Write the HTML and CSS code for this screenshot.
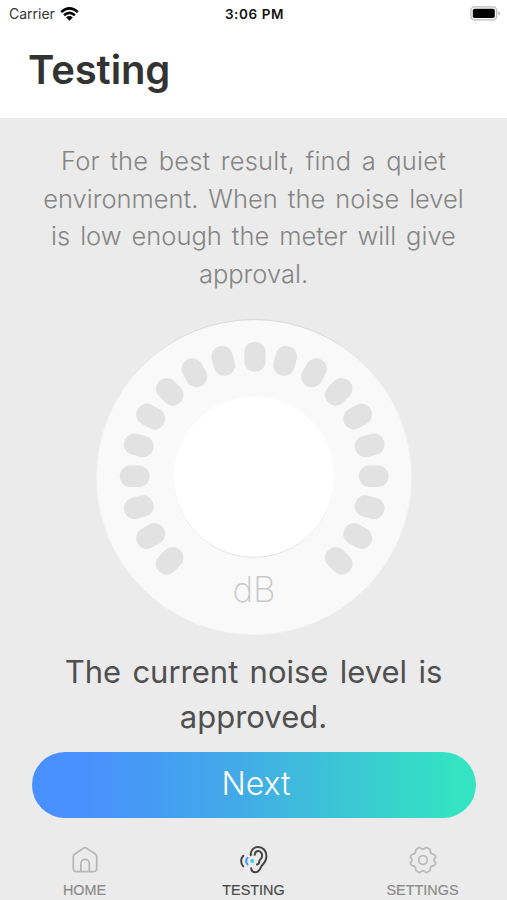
FILE: index.html
```
<!DOCTYPE html>
<html lang="en">
  <head>
    <meta charset="utf-8">
    <title>Testing</title>
    <link rel="stylesheet" href="styles.css">
  </head>
  <body>
    <header class="header">
      <div class="status-bar">
        <div class="carrier">Carrier
          <svg class="wifi" width="19" height="14" viewBox="0 0 19 14">
            <path d="M1.2 5.2Q9.5 -2.4 17.8 5.2M4.1 8.3Q9.5 3.4 14.9 8.3" fill="none" stroke="#000" stroke-width="2.5"/>
            <path d="M6.1 10.4Q9.5 7.6 12.9 10.4L9.5 13.8Z"/>
          </svg>
        </div>
        <div class="time">3:06 PM</div>
        <svg class="battery" width="31" height="15" viewBox="0 0 31 15">
          <rect x=".9" y=".9" width="25.7" height="13" rx="3.6" fill="#fff" stroke="#bbb" stroke-width="1.3"/>
          <rect x="2.8" y="2.8" width="22" height="9.2" rx="1.8"/>
          <path d="M28.3 5.2Q30.2 6 30.2 7.4T28.3 9.6Z" fill="#bbb"/>
        </svg>
      </div>
      <h1>Testing</h1>
    </header>

    <main>
      <p class="hint">
        <span class="wide">For the best result, find a quiet</span>
        <span>environment. When the noise level</span>
        <span>is low enough the meter will give</span>
        <span>approval.</span>
      </p>

      <svg class="meter" width="320" height="320" viewBox="-160 -160 320 320">
        <defs>
          <rect id="tick" x="-10.7" y="-134.5" width="21.4" height="30" rx="10.4"/>
          <linearGradient id="rim" x1="0" y1="0" x2="0" y2="1">
            <stop offset="0" stop-color="#d6d6d6"/>
            <stop offset=".2" stop-color="#f0f0f0"/>
            <stop offset="1" stop-color="#f5f5f5"/>
          </linearGradient>
          <linearGradient id="hub" x1="0" y1="0" x2="0" y2="1">
            <stop offset=".5" stop-color="#fcfcfc"/>
            <stop offset="1" stop-color="#e4e4e4"/>
          </linearGradient>
        </defs>
        <circle r="157.5" fill="#f9f9f9" stroke="url(#rim)"/>
        <circle r="80.3" fill="#fff" stroke="url(#hub)"/>
        <g fill="#e2e2e2" transform="translate(.2 -.7)">
          <use href="#tick" transform="rotate(-135)"/>
          <use href="#tick" transform="rotate(-120)"/>
          <use href="#tick" transform="rotate(-105)"/>
          <use href="#tick" transform="rotate(-90)"/>
          <use href="#tick" transform="rotate(-75)"/>
          <use href="#tick" transform="rotate(-60)"/>
          <use href="#tick" transform="rotate(-45)"/>
          <use href="#tick" transform="rotate(-30)"/>
          <use href="#tick" transform="rotate(-15)"/>
          <use href="#tick" transform="translate(.8 0)"/>
          <use href="#tick" transform="rotate(15)"/>
          <use href="#tick" transform="rotate(30)"/>
          <use href="#tick" transform="rotate(45)"/>
          <use href="#tick" transform="rotate(60)"/>
          <use href="#tick" transform="rotate(75)"/>
          <use href="#tick" transform="rotate(90)"/>
          <use href="#tick" transform="rotate(105)"/>
          <use href="#tick" transform="rotate(120)"/>
          <use href="#tick" transform="rotate(135)"/>
        </g>
        <text class="unit" x="0" y="124.5">dB</text>
      </svg>

      <p class="result">
        <span>The current noise level is</span>
        <span>approved.</span>
      </p>
      <button class="next">Next</button>
    </main>

    <nav class="tabs">
      <a class="tab">
        <svg width="30" height="30" viewBox="0 0 30 30" fill="none" stroke="#b5b5b5" stroke-width="1.7" stroke-linejoin="round">
          <path d="M3.3 11.6Q3.3 10.2 4.5 9.3L13.6 3.1Q15 2.2 16.4 3.1L25.5 9.3Q26.7 10.2 26.7 11.6V23.2Q26.7 26.7 23.2 26.7H6.8Q3.3 26.7 3.3 23.2Z"/>
          <path d="M10.9 26.5V18.6A4.2 4.2 0 0 1 19.3 18.6V26.5"/>
        </svg>
        <span>HOME</span>
      </a>
      <a class="tab active">
        <svg width="30" height="30" viewBox="0 0 30 30" fill="none" stroke="#444" stroke-width="2" stroke-linecap="round">
          <path d="M11.8 10.2C11.4 5.5 14.6 2 19 2C24 2 27.4 5.8 27.4 11C27.4 16.3 24.9 18.4 22.8 20.7C21.2 22.5 21 27.2 16.4 27.2C13.7 27.2 12.4 25.6 12.2 23.3"/>
          <path d="M15.6 9.8C16 7.3 17.3 6 19.3 6.1C22.3 6.2 23.6 9.2 22.8 12.2C22.2 14.4 20.2 14.6 20.2 16.6C20.2 18.5 19.4 19.4 18 19.6"/>
          <path d="M4.3 10.7C1.4 13.7 1.4 18.4 4.3 21.4"/>
          <path d="M8.5 12.8C6.9 14.7 6.9 17.5 8.5 19.4" stroke="#4795fb"/>
          <circle cx="13.2" cy="16" r="2" fill="#35d3e5" stroke="none"/>
        </svg>
        <span>TESTING</span>
      </a>
      <a class="tab">
        <svg width="30" height="30" viewBox="0 0 30 30" fill="none" stroke="#b9b9b9" stroke-width="1.7" stroke-linejoin="round">
          <path d="M11.2 2.6Q12.3 2.1 12.8 3.1Q15 5 17.2 3.1Q17.7 2.1 18.8 2.6L21.5 4.1Q22.6 4.7 22.2 5.8Q22.1 8.8 25.2 9.3Q26.7 9.3 27 10.5Q28.2 12.2 27 13.1Q24.8 15 27 16.9Q28.2 17.9 27 19.5Q26.7 20.7 25.2 20.7Q22.1 21.2 22.2 24.2Q22.6 25.3 21.5 25.9L18.8 27.4Q17.7 27.9 17.2 26.9Q15 25 12.8 26.9Q12.3 27.9 11.2 27.4L8.5 25.9Q7.4 25.3 7.8 24.2Q7.9 21.2 4.8 20.7Q3.3 20.7 3 19.5Q1.8 17.9 3 16.9Q5.2 15 3 13.1Q1.8 12.2 3 10.5Q3.3 9.3 4.8 9.3Q7.9 8.8 7.8 5.8Q7.4 4.7 8.5 4.1Z"/>
          <circle cx="15" cy="15" r="4.3"/>
        </svg>
        <span>SETTINGS</span>
      </a>
    </nav>
  </body>
</html>
```
FILE: styles.css
```
* { box-sizing: border-box; }

body {
	margin: 0;
	height: 900px;
	overflow: hidden;
	display: flex;
	flex-direction: column;
	font-family: Inter, "Liberation Sans", Arial, sans-serif;
	background: #ebebeb;
	color: #4a4a4a;
}

.header { height: 118px; background: #fff; }

.status-bar {
	display: grid;
	grid-template-columns: 1fr auto 1fr;
	align-items: center;
	height: 27px;
	padding: 0 6px 0 8px;
	color: #111;
}

.carrier {
	display: flex;
	align-items: center;
	gap: 5px;
	padding-left: 1px;
	font-size: 14px;
	color: #333;
}

.time { font-size: 13.5px; font-weight: 600; letter-spacing: 0.6px; }
.battery { justify-self: end; }

h1 {
	margin: 17px 0 0 28px;
	font-size: 40px;
	line-height: 52px;
	font-weight: 600;
	letter-spacing: -0.1px;
	color: #333;
}

main { display: flex; flex-direction: column; align-items: center; }

.hint, .result { margin: 0; text-align: center; white-space: nowrap; }
.hint span, .result span { display: block; }

.hint {
	margin-top: 24px;
	font-size: 25.5px;
	line-height: 37.7px;
	font-weight: 300;
	word-spacing: 2.8px;
	color: #858585;
}

.hint .wide { word-spacing: 3px; letter-spacing: 0.2px; }

.meter { margin-top: 24px; }
.unit { font-size: 35px; font-weight: 250; fill: #c9c9c9; text-anchor: middle; }

.result {
	margin-top: 12px;
	font-size: 31px;
	line-height: 45px;
	font-weight: 400;
	word-spacing: 2.6px;
	color: #505050;
}

.next {
	width: 444px;
	height: 66px;
	margin-top: 13px;
	padding: 0 0 3px 5px;
	border: none;
	border-radius: 33px;
	background: linear-gradient(90deg, #488fff 10%, #42ace6 48%, #33e3c2 95%);
	color: #fff;
	font-family: inherit;
	font-size: 32px;
	font-weight: 300;
}

.tabs {
	display: grid;
	grid-template-columns: repeat(3, 1fr);
	margin-top: 27px;
	font-family: "Liberation Sans", Arial, sans-serif;
	font-size: 14.4px;
	color: #8c8c8c;
}

.tab { display: flex; flex-direction: column; align-items: center; gap: 7px; }
.tab span { line-height: 16px; -webkit-text-stroke: 0.2px; }
.tab.active { color: #4a4a4a; }
```
